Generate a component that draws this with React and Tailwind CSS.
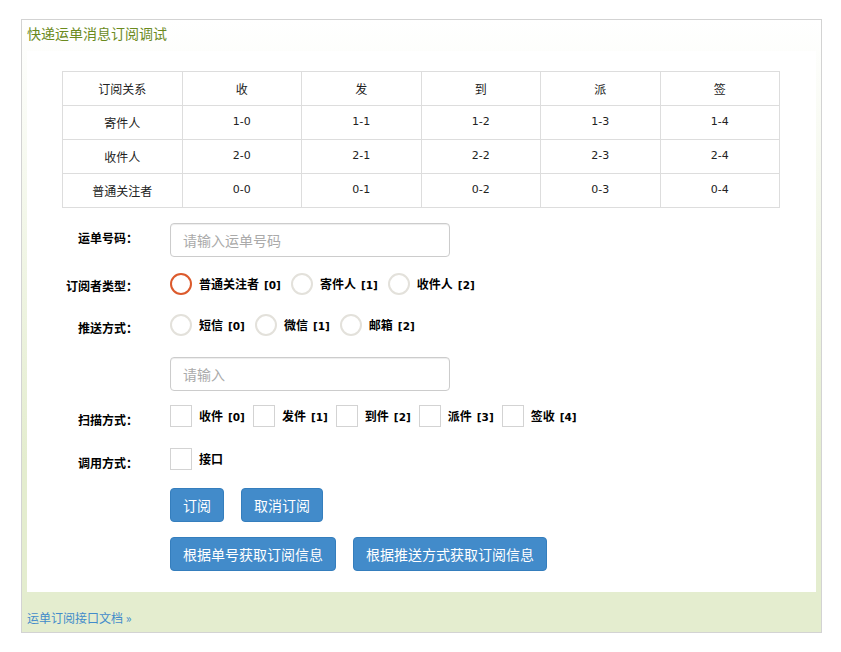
const heads = ['订阅关系', '收', '发', '到', '派', '签'];
const rows = [
  ['寄件人', '1'],
  ['收件人', '2'],
  ['普通关注者', '0'],
];

function Text({ label, code }) {
  return (
    <span className="ml-[7px] flex items-baseline text-[12px] font-bold leading-[16px]">
      <span>{label}</span>
      {code && <span className="ml-[5px] font-['DejaVu_Sans',sans-serif] text-[10.5px]">{code}</span>}
    </span>
  );
}

function Radio({ label, code, checked }) {
  return (
    <label className="mr-[10px] flex items-center">
      <span
        className={
          checked
            ? 'h-[22px] w-[22px] rounded-full border-2 border-[#dc5a2c]'
            : 'h-[22px] w-[22px] rounded-full border-2 border-[#e3e1db]'
        }
      />
      <Text label={label} code={code} />
    </label>
  );
}

function Check({ label, code }) {
  return (
    <label className="mr-[8px] flex items-start">
      <span className="h-[22px] w-[22px] border border-[#d3d3d3]" />
      <span className="pt-[3px]">
        <Text label={label} code={code} />
      </span>
    </label>
  );
}

function Row({ label, className, children, labelClass }) {
  return (
    <div className={'flex items-start ' + className}>
      <div className={'w-[76px] text-right text-[12px] font-bold ' + labelClass}>{label}</div>
      <div className="ml-[32px] flex items-center">{children}</div>
    </div>
  );
}

function Btn({ children }) {
  return (
    <button className="h-[34px] rounded-[4px] border border-[#357ebd] bg-[#428bca] px-[12px] text-[14px] leading-[20px] text-white">
      {children}
    </button>
  );
}

const inputCls =
  'h-[34px] w-[280px] rounded-[4px] border border-[#cccccc] px-[12px] text-[14px] shadow-[inset_0_1px_1px_rgba(0,0,0,0.075)] outline-none placeholder:text-[#aaaaaa]';

export default function App() {
  return (
    <div className="pt-[19px] pl-[21px] font-['Noto_Sans_CJK_SC',sans-serif] text-black">
      <div className="w-[801px] border border-[#d3d3d3] bg-[linear-gradient(to_bottom,#ffffff,#e4edcf_72%)]">
        <div className="h-[31px] pl-[5px] pt-[3px] text-[14px] leading-[20px] text-[#6b8a1d]">快递运单消息订阅调试</div>

        <div className="mx-[5px] bg-white pt-[20px] pb-[21px] pl-[35px]">
          <table className="w-[718px] table-fixed border-collapse text-center text-[12px] text-[#222]">
            <tbody>
              <tr className="h-[34px]">
                {heads.map((h) => (
                  <td key={h} className="border border-[#dddddd]">{h}</td>
                ))}
              </tr>
              {rows.map(([name, n]) => (
                <tr key={name} className="h-[34px]">
                  <td className="border border-[#dddddd]">{name}</td>
                  {[0, 1, 2, 3, 4].map((i) => (
                    <td key={i} className="border border-[#dddddd] font-['DejaVu_Sans',sans-serif] text-[11px]">
                      {n}-{i}
                    </td>
                  ))}
                </tr>
              ))}
            </tbody>
          </table>

          <Row label="运单号码：" className="mt-[15px]" labelClass="mt-[7px] leading-[16px]">
            <input placeholder="请输入运单号码" className={inputCls} />
          </Row>

          <Row label="订阅者类型：" className="mt-[16px]" labelClass="mt-[5px] leading-[16px]">
            <Radio label="普通关注者" code="[0]" checked />
            <Radio label="寄件人" code="[1]" />
            <Radio label="收件人" code="[2]" />
          </Row>

          <Row label="推送方式：" className="mt-[19px]" labelClass="mt-[6px] leading-[16px]">
            <Radio label="短信" code="[0]" />
            <Radio label="微信" code="[1]" />
            <Radio label="邮箱" code="[2]" />
          </Row>

          <Row label="" className="mt-[21px]" labelClass="">
            <input placeholder="请输入" className={inputCls} />
          </Row>

          <Row label="扫描方式：" className="mt-[14px]" labelClass="mt-[8px] leading-[14px]">
            <Check label="收件" code="[0]" />
            <Check label="发件" code="[1]" />
            <Check label="到件" code="[2]" />
            <Check label="派件" code="[3]" />
            <Check label="签收" code="[4]" />
          </Row>

          <Row label="调用方式：" className="mt-[21px]" labelClass="mt-[8px] leading-[14px]">
            <Check label="接口" />
          </Row>

          <div className="mt-[18px] ml-[108px] flex gap-[17px]">
            <Btn>订阅</Btn>
            <Btn>取消订阅</Btn>
          </div>
          <div className="mt-[15px] ml-[108px] flex gap-[17px]">
            <Btn>根据单号获取订阅信息</Btn>
            <Btn>根据推送方式获取订阅信息</Btn>
          </div>
        </div>

        <div className="h-[40px] pl-[5px] pt-[19px] text-[12px] leading-[14px]">
          <a href="#" className="text-[#428bca]">运单订阅接口文档 »</a>
        </div>
      </div>
    </div>
  );
}
